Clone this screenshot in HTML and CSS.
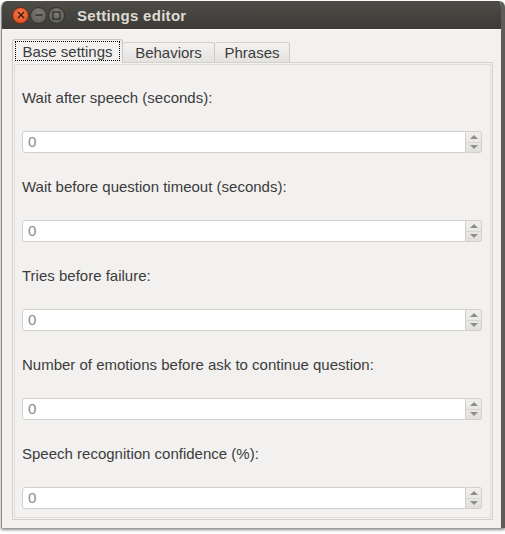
FILE: index.html
```html
<!DOCTYPE html>
<html>
<head>
<meta charset="utf-8">
<link rel="stylesheet" href="styles.css">
</head>
<body>
<div class="window">
  <div class="titlebar">
    <div class="controls">
      <span class="wbtn close"><svg width="8" height="8" viewBox="0 0 8 8"><path d="M1 1L7 7M7 1L1 7" stroke="#3a1a0c" stroke-width="1.4"/></svg></span>
      <span class="wbtn"><svg width="8" height="8" viewBox="0 0 8 8"><path d="M0.5 4H7.5" stroke="#2f2e2b" stroke-width="1.4"/></svg></span>
      <span class="wbtn"><svg width="9" height="9" viewBox="0 0 9 9"><rect x="1" y="1" width="7" height="7" fill="none" stroke="#2f2e2b" stroke-width="1.3"/></svg></span>
    </div>
    <div class="title">Settings editor</div>
  </div>
  <div class="client">
    <div class="tabs">
      <div class="tab active"><span class="focus">Base settings</span></div>
      <div class="tab behaviors">Behaviors</div>
      <div class="tab phrases">Phrases</div>
    </div>
    <div class="panel">
      <div class="inner">
        <div class="row">
          <div class="label">Wait after speech (seconds):</div>
          <div class="spin"><div class="field">0</div><div class="arrows"><span class="up"></span><span class="down"></span></div></div>
        </div>
        <div class="row">
          <div class="label">Wait before question timeout (seconds):</div>
          <div class="spin"><div class="field">0</div><div class="arrows"><span class="up"></span><span class="down"></span></div></div>
        </div>
        <div class="row">
          <div class="label">Tries before failure:</div>
          <div class="spin"><div class="field">0</div><div class="arrows"><span class="up"></span><span class="down"></span></div></div>
        </div>
        <div class="row">
          <div class="label">Number of emotions before ask to continue question:</div>
          <div class="spin"><div class="field">0</div><div class="arrows"><span class="up"></span><span class="down"></span></div></div>
        </div>
        <div class="row">
          <div class="label">Speech recognition confidence (%):</div>
          <div class="spin"><div class="field">0</div><div class="arrows"><span class="up"></span><span class="down"></span></div></div>
        </div>
      </div>
    </div>
  </div>
</div>
</body>
</html>
```
FILE: styles.css
```css
html, body {
  margin: 0;
  padding: 0;
  background: #ffffff;
  width: 505px;
  height: 534px;
  overflow: hidden;
}
body {
  font-family: "Liberation Sans", Arial, sans-serif;
  font-size: 15px;
  color: #3c3c3c;
}
.window {
  margin: 1px 0 0 1px;
  width: 504px;
  box-sizing: border-box;
  border-radius: 6px 6px 0 0;
  border-right: 4px solid #5e5d59;
  border-left: 1px solid #8d8b87;
  box-shadow: 0 2px 3px rgba(0,0,0,0.45);
  overflow: hidden;
}
.titlebar {
  height: 28px;
  background: linear-gradient(#4d4c47, #3c3b37);
  display: flex;
  align-items: center;
  padding-left: 10px;
}
.controls {
  display: flex;
  gap: 1px;
}
.wbtn {
  width: 17px;
  height: 17px;
  border-radius: 50%;
  background: radial-gradient(circle at 50% 35%, #7c7b76, #57564f);
  border: 1px solid #34332f;
  box-sizing: border-box;
  display: flex;
  align-items: center;
  justify-content: center;
}
.wbtn.close {
  background: radial-gradient(circle at 50% 35%, #f7784a, #d9461a);
  border-color: #6b2a12;
}
.title {
  margin-left: 12px;
  font-weight: bold;
  font-size: 15px;
  color: #dfdbd2;
  letter-spacing: 0.3px;
}
.client {
  background: #f2f1f0;
  height: 499px;
  padding: 9px 0 0 10px;
  box-sizing: border-box;
  border-top: 1px solid #f8f7f6;
}
.tabs {
  display: flex;
  align-items: flex-end;
  height: 23px;
  position: relative;
  z-index: 1;
}
.tab {
  height: 20px;
  box-sizing: border-box;
  border: 1px solid #cdcbc8;
  border-top-color: #dcc9c0;
  border-bottom: none;
  border-radius: 3px 3px 0 0;
  background: linear-gradient(#f4f3f2, #e4e2df);
  display: flex;
  align-items: center;
  justify-content: center;
  color: #3c3c3c;
}
.tab.behaviors {
  width: 92px;
  border-left: none;
}
.tab.phrases {
  width: 75px;
  border-left: none;
}
.tab.active {
  width: 111px;
  height: 24px;
  padding: 1px 2px 0 2px;
  align-items: flex-start;
  background: #f2f1f0;
  border-color: #c9c7c4;
  margin-bottom: -1px;
}
.focus {
  display: flex;
  align-items: center;
  justify-content: center;
  width: 100%;
  height: 20px;
  border: 1px dotted #000;
  box-sizing: border-box;
}
.panel {
  width: 481px;
  height: 458px;
  box-sizing: border-box;
  border: 1px solid #d3d1ce;
  padding: 1px;
}
.inner {
  height: 100%;
  box-sizing: border-box;
  border: 1px solid #e0dedb;
  padding: 23px 0 0 7px;
}
.row {
  height: 89px;
}
.label {
  height: 20px;
  line-height: 20px;
}
.spin {
  margin-top: 23px;
  display: flex;
  height: 22px;
  width: 460px;
}
.field {
  width: 444px;
  height: 22px;
  box-sizing: border-box;
  border: 1px solid #d2d0cd;
  border-radius: 3px 0 0 3px;
  background: #fff;
  color: #8b8b8b;
  padding-left: 5px;
  line-height: 20px;
}
.arrows {
  width: 16px;
  display: flex;
  flex-direction: column;
  border: 1px solid #d2d0cd;
  border-left: none;
  border-radius: 0 3px 3px 0;
  box-sizing: border-box;
  background: linear-gradient(#f0efed, #e2e0dd);
}
.arrows span {
  flex: 1;
  display: flex;
  align-items: center;
  justify-content: center;
}
.arrows .up {
  border-bottom: 1px solid #d8d6d3;
}
.arrows .up::before {
  content: "";
  border-left: 4px solid transparent;
  border-right: 4px solid transparent;
  border-bottom: 4px solid #8e8d8a;
}
.arrows .down::before {
  content: "";
  border-left: 4px solid transparent;
  border-right: 4px solid transparent;
  border-top: 4px solid #8e8d8a;
}
```
